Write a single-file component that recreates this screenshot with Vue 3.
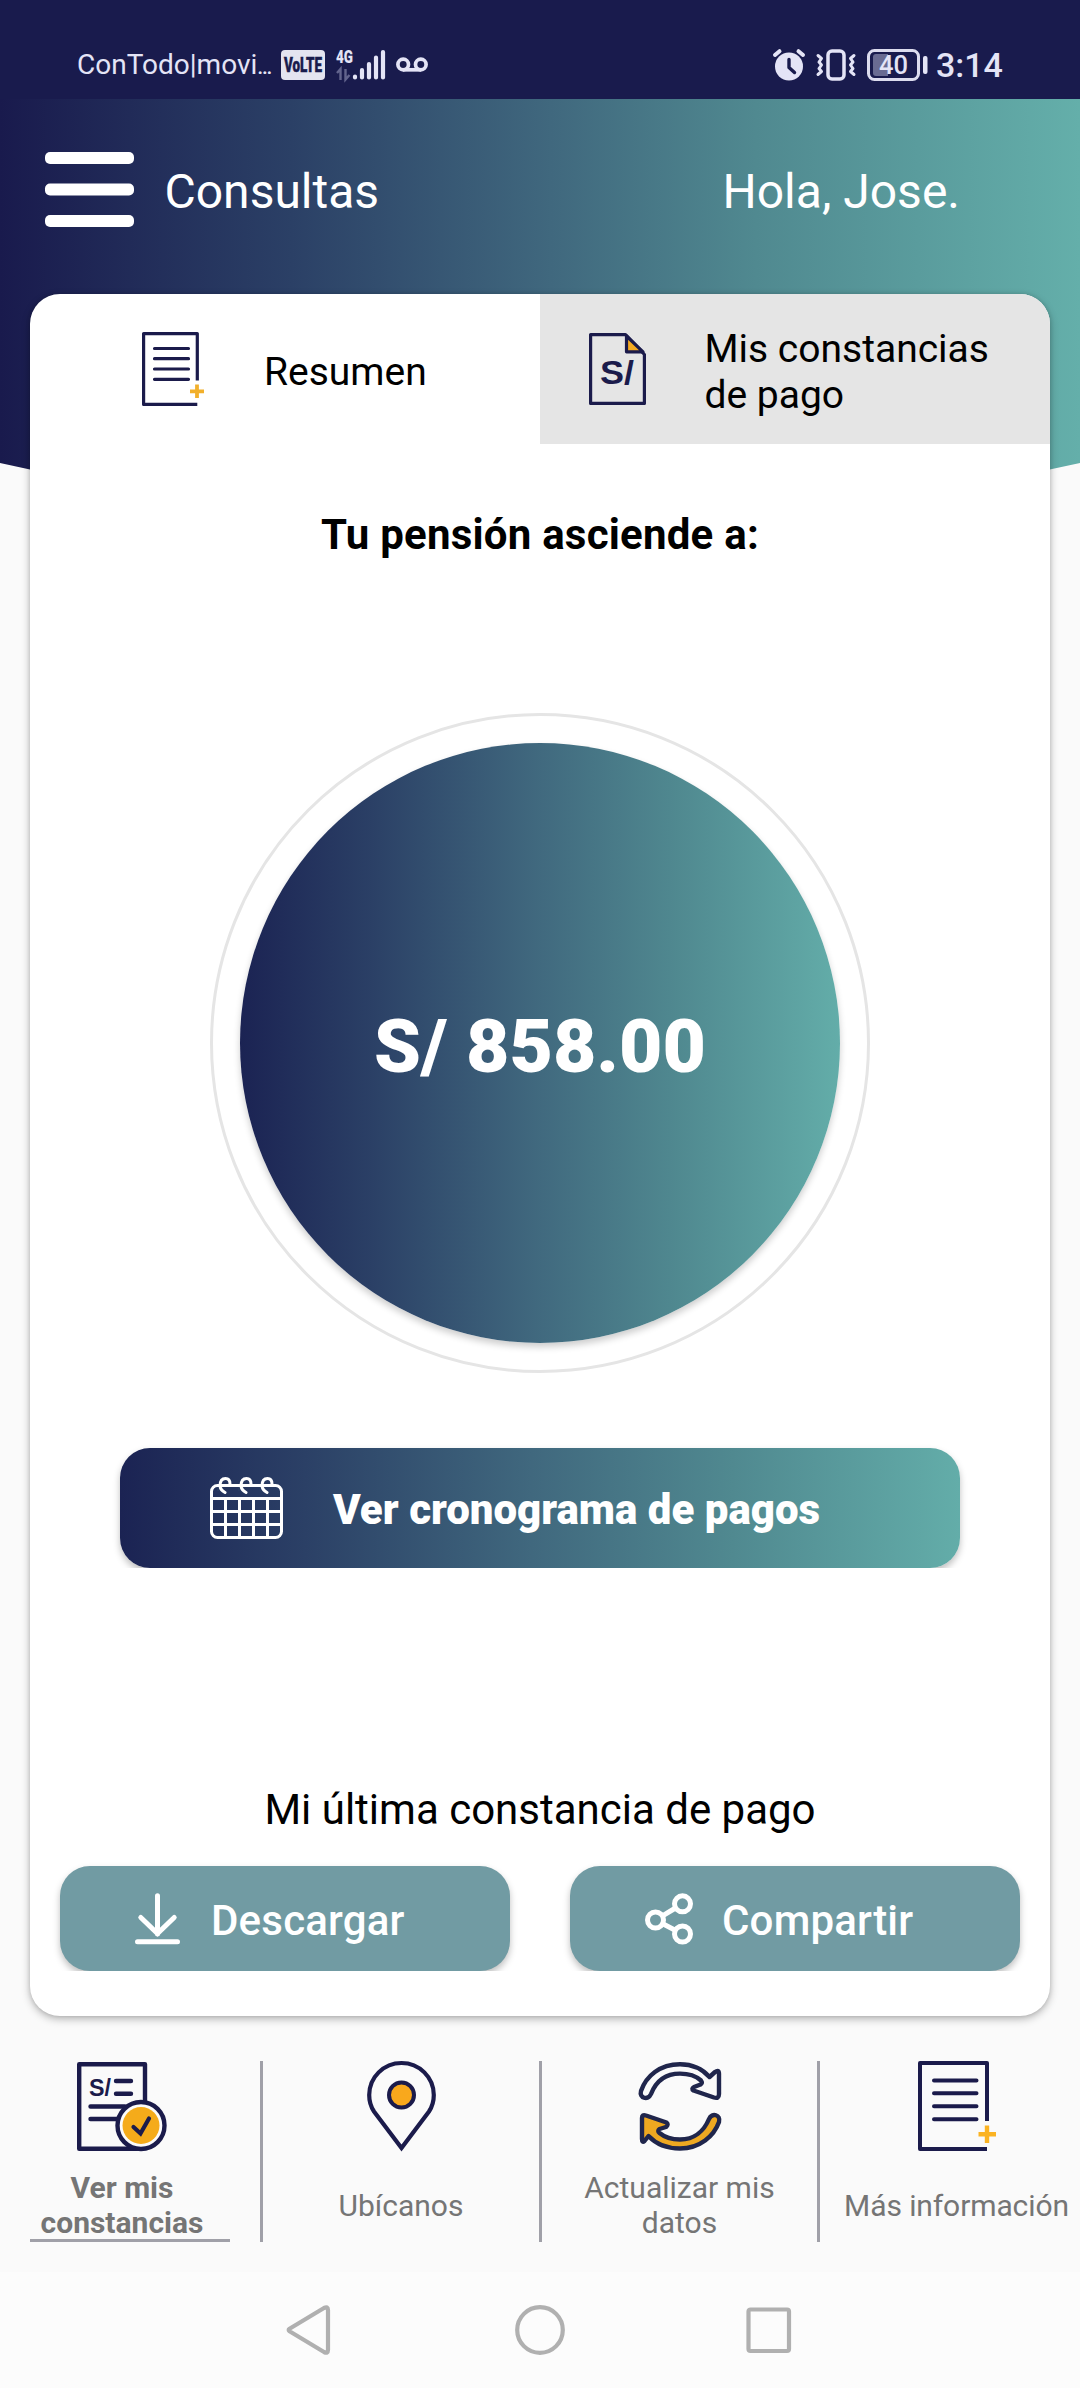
<script setup>
const navItems = [
  { id: 'constancias', lines: ['Ver mis', 'constancias'], active: true },
  { id: 'ubicanos', lines: ['Ubícanos'] },
  { id: 'datos', lines: ['Actualizar mis', 'datos'] },
  { id: 'info', lines: ['Más información'] },
]
</script>

<template>
  <div class="screen">
    <div class="status">
      <span class="carrier">ConTodo|movi<span class="dots">…</span></span>
      <span class="volte"><svg width="44" height="30" viewBox="0 0 44 30"><rect width="44" height="30" rx="4" fill="#e4e4f0" /><text x="3" y="21.500" textLength="38" lengthAdjust="spacingAndGlyphs" font-size="19.500" font-weight="900" fill="#191b4d" stroke="#191b4d" stroke-width=".5">VoLTE</text></svg></span>
      <svg class="signal" width="50" height="32" viewBox="0 0 50 32">
        <text x="0" y="14" textLength="17" lengthAdjust="spacingAndGlyphs" font-size="19" font-weight="900" fill="#e4e4f6">4G</text>
        <g fill="none" stroke="#62648d" stroke-width="2.400"><path d="M1 24 4.500 20V31M9.500 20V30.500L13.500 26" /></g>
        <g stroke="#e4e4f6" stroke-width="4.200" stroke-linecap="round"><path d="M19 27.500V28.500M26 21.200V28.500M33 15V28.500M40 8.500V28.500M47 3V28.500" /></g>
      </svg>
      <svg class="voicemail" width="32" height="16" viewBox="0 0 32 16"><g fill="none" stroke="#e4e4f6" stroke-width="3.700"><circle cx="7.200" cy="7.500" r="5.300" /><circle cx="24.800" cy="7.500" r="5.300" /><path d="M7 12.800H25" /></g></svg>

      <svg class="alarm" width="32" height="32" viewBox="0 0 32 32"><circle cx="16" cy="17.500" r="14" fill="#e4e4f6" /><path d="M2 6 6.500 2.200M30 6 25.500 2.200" stroke="#e4e4f6" stroke-width="4" stroke-linecap="round" /><path d="M16 10.500V18.500L21.500 23.500" fill="none" stroke="#191b4d" stroke-width="3.400" stroke-linecap="round" stroke-linejoin="round" /></svg>
      <svg class="vibrate" width="40" height="32" viewBox="0 0 40 32"><g fill="none" stroke="#e4e4f6" stroke-width="3.500" stroke-linecap="round" stroke-linejoin="round"><rect x="12" y="2" width="16" height="28" rx="4" /><path d="M2 6.500 5.500 9.500 3 13 5.500 16 3 19.500 5.500 22.500 2 25.500M38 6.500 34.500 9.500 37 13 34.500 16 37 19.500 34.500 22.500 38 25.500" stroke-width="3" /></g></svg>
      <svg class="battery" width="61" height="34" viewBox="0 0 61 34"><rect x="1.500" y="2.500" width="50" height="29" rx="6" fill="none" stroke="#dcdcee" stroke-width="3" /><path d="M9 6H21V28H9Q6 28 6 25V9Q6 6 9 6Z" fill="#696b92" /><rect x="56" y="8" width="4.500" height="18" rx="2" fill="#e4e4f6" /><text x="12" y="25.500" textLength="29" lengthAdjust="spacingAndGlyphs" font-size="26" font-weight="500" fill="#e4e4f6">40</text></svg>
      <span class="clock">3:14</span>
    </div>

    <header class="header">
      <svg class="menu" width="89" height="75" viewBox="0 0 89 75" fill="#fff"><rect width="89" height="12" rx="5" /><rect y="31.500" width="89" height="12" rx="5" /><rect y="63" width="89" height="12" rx="5" /></svg>
      <span class="page-title">Consultas</span>
      <span class="greeting">Hola, Jose.</span>
    </header>

    <main class="card">
      <div class="tabs">
        <div class="tab">
          <svg width="62" height="74" viewBox="0 0 62 74"><g fill="none" stroke="#1b1b4b" stroke-width="3.200" stroke-linecap="round" stroke-linejoin="round"><path d="M55.300 48.500V1.600H1.600V72.400H55.300" stroke-linecap="butt" /><path d="M12.500 16.500H46.500M12.500 26.700H46.500M12.500 37H46.500M12.500 47.300H46.500" /></g><path d="M48 59.300H62M55 52.500V66" stroke="#f2b02b" stroke-width="3.800" /></svg>
          <span>Resumen</span>
        </div>
        <div class="tab off">
          <svg width="57" height="72" viewBox="0 0 57 72"><g stroke="#1b1b4b" stroke-width="3.200" stroke-linejoin="round"><path d="M36.500 1.600H1.600V70.400H55.400V21.500Z" fill="none" /><path d="M37.500 3V18.800H54Z" fill="#f5ab23" /></g><text x="11" y="51" textLength="34" lengthAdjust="spacingAndGlyphs" class="sol" font-size="34">S/</text></svg>
          <span>Mis constancias<br />de pago</span>
        </div>
      </div>

      <h1 class="lead">Tu pensión asciende a:</h1>
      <div class="ring"><div class="disc"><span>S/ 858.00</span></div></div>

      <button class="btn schedule">
        <svg width="73" height="62" viewBox="0 0 73 62" fill="none" stroke="#fff" stroke-width="3"><rect x="1.500" y="8.500" width="70" height="52" rx="6" /><path d="M2 21.500H71M2 34.500H71M2 47.500H71M15.500 21V60M29.500 21V60M43.500 21V60M57.500 21V60" /><g stroke="#283b62" stroke-width="6"><path d="M10 10V14M31 10V14M52 10V14" /></g><path d="M10 9C10 4 12 1.500 15.500 1.500S20 4.500 20 7M10 9Q10.500 13 15 15.500M31 9C31 4 33 1.500 36.500 1.500S41 4.500 41 7M31 9Q31.500 13 36 15.500M52 9C52 4 54 1.500 57.500 1.500S62 4.500 62 7M52 9Q52.500 13 57 15.500" stroke-linecap="round" /></svg>
        <span>Ver cronograma de pagos</span>
      </button>

      <p class="last">Mi última constancia de pago</p>
      <div class="actions">
        <button class="btn action">
          <svg width="45" height="52" viewBox="0 0 45 52" fill="none" stroke="#fff" stroke-width="5" stroke-linecap="round"><path d="M22.500 2.800V41M5.800 24.500 22.500 40.500 39.200 24.500M2.500 48.800H42.500" /></svg>
          <span>Descargar</span>
        </button>
        <button class="btn action share">
          <svg width="48" height="52" viewBox="0 0 48 52" fill="none" stroke="#fff" stroke-width="5"><circle cx="10.500" cy="27" r="8" /><circle cx="37.500" cy="10.800" r="8" /><circle cx="37.500" cy="41" r="8" /><path d="M17.500 22.800 30.500 15M17.800 30.800 30.200 37.200" /></svg>
          <span>Compartir</span>
        </button>
      </div>
    </main>

    <nav class="tabbar">
      <div v-for="item in navItems" :key="item.id" class="item" :class="[item.id, { active: item.active }]">
        <svg v-if="item.id === 'constancias'" width="90" height="90" viewBox="0 0 90 90"><g fill="none" stroke="#1b1b4b" stroke-width="4.400" stroke-linecap="round" stroke-linejoin="round"><path d="M68 42V3.200H2.200V87.800H60" /><path d="M39 20H54M39 32.700H54M13.500 45.500H48M13.500 58H42" /></g><text x="12" y="34.500" textLength="22" lengthAdjust="spacingAndGlyphs" class="sol" font-size="23">S/</text><circle cx="64" cy="64.500" r="23.500" fill="#fbfbfb" stroke="#1b1b4b" stroke-width="4.400" /><circle cx="64" cy="64.500" r="18.500" fill="#f5ab1a" /><path d="M56.500 66 63.500 72.500 72 57.500" fill="none" stroke="#1b1b4b" stroke-width="4.200" stroke-linecap="round" /></svg>
        <svg v-else-if="item.id === 'ubicanos'" width="69" height="90" viewBox="0 0 69 90"><path d="M34.500 87 7 50.500C4 46 2.200 40 2.200 34A32.300 32 0 0 1 66.800 34C66.800 40 65 46 62 50.500Z" fill="none" stroke="#1b1b4b" stroke-width="4.200" /><circle cx="34.500" cy="34" r="12.500" fill="#f9a81c" stroke="#1b1b4b" stroke-width="4" /></svg>
        <svg v-else-if="item.id === 'datos'" width="84" height="90" viewBox="0 0 84 90"><g stroke="#20264c" stroke-width="4.400" stroke-linejoin="round"><path d="M3 30C8 15 22 3.200 42 3.200C55 3.200 64.500 8 71.500 16L77 11Q81 8 81 13V33Q81 38 76 36.500L55.500 29.500Q53 28 56 26L62.500 23.500Q65 22 63 19.500C58 15 50 12.600 42 12.600C28 12.600 18 20 13 33C10 40 1 37 3 30Z" fill="none" /><path d="M81 61C76 75 62 87.500 42 87.500C29 87.500 18 83 10.500 75L6.500 80Q4 82 4 78V57Q4 53 8 54.500L28.500 61.500Q31 63.500 28 66L21.500 68Q19 70 21.500 72C27 76.500 34 78.500 42 78.500C56 78.500 66 70 71 58C74 51 83 54 81 61Z" fill="#eea821" /></g></svg>
        <svg v-else width="78" height="90" viewBox="0 0 78 90"><g fill="none" stroke="#1b1b4b" stroke-width="4" stroke-linecap="round" stroke-linejoin="round"><path d="M69 60V2H2V88H69" stroke-linecap="butt" /><path d="M16 19.500H58.500M16 32.300H58.500M16 45.300H58.500M16 58.200H58.500" /></g><path d="M60.500 73.300H78M69 64.500V82" stroke="#fbb322" stroke-width="4.400" /></svg>
        <div class="label"><span v-for="line in item.lines" :key="line">{{ line }}</span></div>
      </div>
    </nav>

    <div class="sysnav">
      <svg width="504" height="50" viewBox="0 0 504 50" fill="none" stroke="#b0b0b0" stroke-width="4.200" stroke-linejoin="round"><path d="M2.500 23.800Q.8 25 2.500 26.200L37 47Q41 49 41 45V5Q41 1 37 3Z" /><circle cx="253" cy="25" r="22.800" /><rect x="461.500" y="4.500" width="40.500" height="41.500" rx="2" /></svg>
    </div>
  </div>
</template>

<style>
body { margin: 0; background: #fafafa; }
</style>

<style scoped>
.screen { width: 1080px; height: 2388px; overflow: hidden; background: #fafafa; font-family: Roboto, "Liberation Sans", sans-serif; color: #000; }
svg { display: block; flex: none; overflow: visible; }
svg text { font-family: Roboto, sans-serif; }
svg .sol { font-family: "Liberation Sans", sans-serif; font-weight: 700; fill: #1b1b4b; }
span { white-space: nowrap; }

.status { box-sizing: border-box; height: 99px; padding: 30px 0 0 77px; display: flex; align-items: center; background: #191b4d; color: #e4e4f6; }
.carrier { width: 204px; font-size: 28px; line-height: 34px; }
.dots { font-size: 21px; font-weight: 500; line-height: 0; }
.signal { margin-left: 11px; }
.voicemail { margin-left: 10px; }
.alarm { margin-left: 345px; }
.vibrate { margin-left: 11px; }
.battery { margin-left: 11px; }
.clock { margin-left: 8px; font-size: 34px; font-weight: 500; line-height: 40px; }

.header { box-sizing: border-box; height: 481px; padding: 53px 0 0 45px; display: flex; align-items: flex-start; background: linear-gradient(90deg, #191a4d 0%, #2b4066 27%, #40687e 51%, #508990 70%, #64afaa 100%); clip-path: polygon(0 0, 100% 0, 100% 364px, 50% 100%, 0 364px); color: #fff; font-size: 48px; line-height: 56px; }
.page-title { width: 558px; margin: 12px 0 0 30.500px; }
.greeting { margin-top: 12px; }

.card { position: relative; box-sizing: border-box; width: 1020px; height: 1722px; margin: -286px auto 0; border-radius: 30px; background: #fff; display: flex; flex-direction: column; align-items: center; box-shadow: 0 3px 8px rgba(0, 0, 0, .28), 0 0 4px rgba(0, 0, 0, .12); }
.tabs { width: 100%; height: 150px; display: flex; border-radius: 30px 30px 0 0; overflow: hidden; flex: none; }
.tab { box-sizing: border-box; width: 510px; padding-left: 112px; display: flex; align-items: center; font-size: 39px; line-height: 46px; }
.tab span { margin: 5px 0 0 60px; }
.tab.off { padding-left: 49px; background: #e5e5e5; }
.tab.off span { margin-left: 58.500px; }
.lead { margin: 66px 0 0; font-size: 42px; line-height: 50px; font-weight: 700; letter-spacing: .22px; }
.ring { box-sizing: border-box; width: 660px; height: 660px; margin-top: 153px; flex: none; display: flex; align-items: center; justify-content: center; border: 3px solid #e5e5e5; border-radius: 50%; }
.disc { width: 600px; height: 600px; display: flex; align-items: center; justify-content: center; border-radius: 50%; background: linear-gradient(90deg, #1b2353 0%, #2b4066 22%, #40687e 49%, #508990 73%, #63ada9 100%); box-shadow: 0 4px 7px rgba(0, 0, 0, .2); color: #fff; font-size: 75px; font-weight: 900; line-height: 88px; }
.disc span { margin-top: 6px; }
.btn { box-sizing: border-box; padding: 0; border: 0; border-radius: 30px; color: #fff; font: 700 42px/50px Roboto, sans-serif; display: flex; align-items: center; box-shadow: 0 4px 7px rgba(0, 0, 0, .25); clip-path: inset(-8px -12px 0 -12px); }
.schedule { width: 840px; height: 120px; margin-top: 75px; padding-left: 90px; flex: none; font-weight: 900; background: linear-gradient(90deg, #1b2353 0%, #2b4066 22%, #40687e 49%, #508990 73%, #63ada9 100%); }
.schedule span { margin: 3px 0 0 50px; }
.last { margin: 217px 0 0; font-size: 42px; line-height: 50px; }
.actions { width: 960px; margin-top: 31px; display: flex; justify-content: space-between; }
.action { width: 450px; height: 105px; padding-left: 75px; background: #719ba3; font-weight: 500; letter-spacing: .2px; }
.action span { margin: 4px 0 0 31px; }
.share span { margin-left: 29px; }

.tabbar { height: 181px; margin-top: 45px; display: flex; color: #757575; font-size: 30px; line-height: 35px; }
.item { box-sizing: border-box; display: flex; flex-direction: column; align-items: center; border-left: 3px solid #a0a0a8; }
.label { height: 74px; margin-top: 17px; display: flex; flex-direction: column; align-items: center; justify-content: center; }
.constancias { width: 260px; padding-right: 16px; border-left: 0; }
.active .label { width: 200px; margin-left: 16px; border-bottom: 3px solid #a0a0a8; height: 72px; font-weight: 700; }
.active .label span { position: relative; left: -8px; top: 1px; }
.ubicanos { width: 279px; }
.datos { width: 278px; }
.info { width: 263px; padding-left: 13px; letter-spacing: -.1px; }

.sysnav { box-sizing: border-box; height: 116px; margin-top: 30px; padding: 33px 0 0 287px; background: #fcfcfc; }
</style>
